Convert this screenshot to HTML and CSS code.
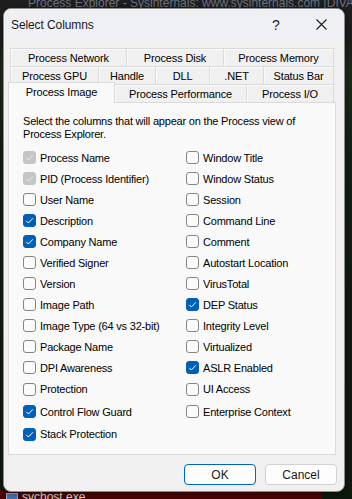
FILE: index.html
```html
<!DOCTYPE html>
<html>
<head>
<meta charset="utf-8">
<link rel="stylesheet" href="styles.css">
</head>
<body>
<div class="app">
  <div class="app-title">Process Explorer - Sysinternals: www.sysinternals.com [DIVAN\Vasya]</div>
  <div class="app-main">
    <div class="app-rows">
      <div class="proc-row"><div class="proc-cell"><span class="proc-icon"></span>svchost.exe</div><div class="proc-rest"></div></div>
    </div>
  </div>
</div>

<div class="dialog">
  <div class="titlebar">
    <span class="title">Select Columns</span>
    <span class="help">?</span>
    <span class="close"><svg width="11" height="11" viewBox="0 0 11 11"><path d="M0.5 0.5 L10.5 10.5 M10.5 0.5 L0.5 10.5" stroke="#1b1b1b" stroke-width="1.1" fill="none"/></svg></span>
  </div>
  <div class="body">
    <div class="tabs">
      <div class="tabrow r1">
        <div class="tab" style="width:117px">Process Network</div>
        <div class="tab" style="width:98px">Process Disk</div>
        <div class="tab" style="width:111px">Process Memory</div>
      </div>
      <div class="tabrow r2">
        <div class="tab" style="width:89px">Process GPU</div>
        <div class="tab" style="width:58px">Handle</div>
        <div class="tab" style="width:55px">DLL</div>
        <div class="tab" style="width:55px">.NET</div>
        <div class="tab" style="width:71px">Status Bar</div>
      </div>
      <div class="tabrow r3">
        <div class="tab sel" style="width:107px">Process Image</div>
        <div class="tab" style="width:133px">Process Performance</div>
        <div class="tab" style="width:88px">Process I/O</div>
      </div>
    </div>
    <div class="panel">
      <p class="intro">Select the columns that will appear on the Process view of<br>Process Explorer.</p>
      <div class="grid">
        <label class="item"><span class="cb dis"><svg viewBox="0 0 13 13"><path d="M3.2 6.8 L5.4 9 L9.9 4.3"/></svg></span>Process Name</label>
        <label class="item"><span class="cb"></span>Window Title</label>
        <label class="item"><span class="cb dis"><svg viewBox="0 0 13 13"><path d="M3.2 6.8 L5.4 9 L9.9 4.3"/></svg></span>PID (Process Identifier)</label>
        <label class="item"><span class="cb"></span>Window Status</label>
        <label class="item"><span class="cb"></span>User Name</label>
        <label class="item"><span class="cb"></span>Session</label>
        <label class="item"><span class="cb on"><svg viewBox="0 0 13 13"><path d="M3.2 6.8 L5.4 9 L9.9 4.3"/></svg></span>Description</label>
        <label class="item"><span class="cb"></span>Command Line</label>
        <label class="item"><span class="cb on"><svg viewBox="0 0 13 13"><path d="M3.2 6.8 L5.4 9 L9.9 4.3"/></svg></span>Company Name</label>
        <label class="item"><span class="cb"></span>Comment</label>
        <label class="item"><span class="cb"></span>Verified Signer</label>
        <label class="item"><span class="cb"></span>Autostart Location</label>
        <label class="item"><span class="cb"></span>Version</label>
        <label class="item"><span class="cb"></span>VirusTotal</label>
        <label class="item"><span class="cb"></span>Image Path</label>
        <label class="item"><span class="cb on"><svg viewBox="0 0 13 13"><path d="M3.2 6.8 L5.4 9 L9.9 4.3"/></svg></span>DEP Status</label>
        <label class="item"><span class="cb"></span>Image Type (64 vs 32-bit)</label>
        <label class="item"><span class="cb"></span>Integrity Level</label>
        <label class="item"><span class="cb"></span>Package Name</label>
        <label class="item"><span class="cb"></span>Virtualized</label>
        <label class="item"><span class="cb"></span>DPI Awareness</label>
        <label class="item"><span class="cb on"><svg viewBox="0 0 13 13"><path d="M3.2 6.8 L5.4 9 L9.9 4.3"/></svg></span>ASLR Enabled</label>
        <label class="item"><span class="cb"></span>Protection</label>
        <label class="item"><span class="cb"></span>UI Access</label>
        <label class="item"><span class="cb on"><svg viewBox="0 0 13 13"><path d="M3.2 6.8 L5.4 9 L9.9 4.3"/></svg></span>Control Flow Guard</label>
        <label class="item"><span class="cb"></span>Enterprise Context</label>
        <label class="item"><span class="cb on"><svg viewBox="0 0 13 13"><path d="M3.2 6.8 L5.4 9 L9.9 4.3"/></svg></span>Stack Protection</label>
        <span></span>
      </div>
    </div>
    <div class="buttons">
      <button class="btn ok">OK</button>
      <button class="btn">Cancel</button>
    </div>
  </div>
</div>
</body>
</html>
```

FILE: styles.css
```css
* { box-sizing: border-box; }
html, body { margin: 0; padding: 0; }
body {
  width: 352px;
  height: 499px;
  overflow: hidden;
  background: #1c1c1c;
  font-family: "Liberation Sans", Arial, sans-serif;
  position: relative;
}

/* background application window */
.app {
  height: 499px;
  display: flex;
  flex-direction: column;
}
.app-title {
  height: 40px;
  background: #1f1f1f;
  color: #6d7686;
  font-size: 12px;
  line-height: 6px;
  padding: 0 0 0 28px;
  white-space: nowrap;
  overflow: hidden;
}
.app-main {
  flex: 1;
  display: flex;
  flex-direction: column;
  justify-content: flex-end;
  background: linear-gradient(#1a1f1a 0, #1b2e1b 30px, #132013 120px, #0f1a0f 100%);
}
.app-rows {
  height: 9px;
  overflow: hidden;
}
.proc-row {
  display: flex;
  height: 16px;
}
.proc-cell {
  width: 322px;
  background: #4d0404;
  color: #e8e8e8;
  font-size: 12px;
  line-height: 14px;
  padding-left: 6px;
  display: flex;
  align-items: flex-start;
  gap: 4px;
}
.proc-icon {
  width: 12px;
  height: 10px;
  margin-top: 3px;
  background: #4a78b5;
  border: 1px solid #9fb9dd;
}
.proc-rest {
  flex: 1;
  background: #0d1a0d;
}

/* dialog */
.dialog {
  position: absolute;
  left: 3px;
  top: 8px;
  width: 342px;
  height: 484px;
  border-radius: 8px;
  background: #f0f0f0;
  border: 1px solid #8e8e8e;
  box-shadow: 0 2px 10px rgba(0, 0, 0, 0.5);
  display: flex;
  flex-direction: column;
  overflow: hidden;
}
.titlebar {
  height: 29px;
  flex: none;
  background: #eff0f4;
  display: flex;
  align-items: center;
}
.title {
  flex: 1;
  padding-left: 7px;
  font-size: 12px;
  letter-spacing: -0.1px;
  color: #1a1a1a;
  padding-top: 2px;
}
.help {
  width: 46px;
  text-align: center;
  font-size: 14px;
  color: #1a1a1a;
  padding-top: 2px;
}
.close {
  width: 45px;
  height: 29px;
  display: flex;
  align-items: center;
  justify-content: center;
  padding-top: 2px;
}

.body {
  flex: 1;
  padding: 10px 8px 0 4px;
  display: flex;
  flex-direction: column;
}

.tabs {
  display: flex;
  flex-direction: column;
}
.tabrow {
  display: flex;
  height: 18px;
}
.r1, .r2 { margin-left: 2px; }
.r3 {
  height: 20px;
  margin-top: -2px;
  align-items: flex-end;
}
.tab {
  height: 18px;
  border: 1px solid #dadada;
  border-bottom: none;
  background: #f0f0f0;
  box-shadow: inset 1px 1px 0 #fbfbfb;
  font-size: 11px;
  letter-spacing: -0.15px;
  color: #000;
  display: flex;
  align-items: center;
  justify-content: center;
  margin-right: -1px;
  white-space: nowrap;
}
.tab.sel {
  height: 21px;
  margin-bottom: -1px;
  background: #f9f9f9;
  box-shadow: none;
  padding-bottom: 3px;
  position: relative;
  z-index: 1;
}

.panel {
  width: 328px;
  height: 353px;
  background: #f9f9f9;
  border: 1px solid #dadada;
  padding: 12px 0 0 14px;
}
.intro {
  margin: 0;
  font-size: 11px;
  line-height: 13px;
  letter-spacing: -0.2px;
  color: #000;
}
.grid {
  margin-top: 6px;
  display: grid;
  grid-template-columns: 163px 1fr;
  grid-template-rows: repeat(11, 21px) 22.5px 22.5px 22.5px;
}
.item {
  display: flex;
  align-items: center;
  gap: 4px;
  font-size: 11px;
  letter-spacing: -0.2px;
  color: #000;
  white-space: nowrap;
}
.cb {
  width: 13px;
  height: 13px;
  flex: none;
  border-radius: 3px;
  border: 1px solid #858585;
  background: #fbfbfb;
  display: flex;
}
.cb svg {
  width: 13px;
  height: 13px;
  margin: -1px;
}
.cb path {
  fill: none;
  stroke: #ffffff;
  stroke-width: 1;
}
.cb.on {
  background: #005fb8;
  border-color: #005fb8;
}
.cb.dis {
  background: #c5c5c5;
  border-color: #c5c5c5;
}
.cb.dis path {
  stroke: #ececec;
}

.buttons {
  display: flex;
  justify-content: flex-end;
  gap: 9px;
  padding-top: 9px;
  margin-right: -1px;
}
.btn {
  width: 72px;
  height: 21px;
  border-radius: 4px;
  border: 1px solid #d1d1d1;
  background: #fdfdfd;
  font-family: "Liberation Sans", Arial, sans-serif;
  font-size: 12px;
  color: #1a1a1a;
  padding: 0;
}
.btn.ok {
  border-color: #0067c0;
}
```
